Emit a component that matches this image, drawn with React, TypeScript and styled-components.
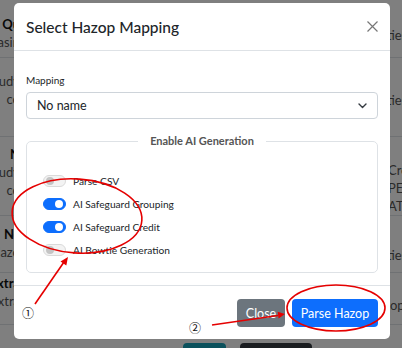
import React from "react";
import styled, { createGlobalStyle } from "styled-components";

const Global = createGlobalStyle`
  html, body { margin: 0; padding: 0; }
  body {
    width: 402px;
    height: 348px;
    overflow: hidden;
    background: #ffffff;
    font-family: Lato, "Noto Sans", Arial, sans-serif;
    color: #212529;
  }
  * { box-sizing: border-box; }
`;

const Screen = styled.div`
  position: relative;
  width: 402px;
  height: 348px;
  overflow: hidden;
`;

const PageList = styled.div`
  display: flex;
  flex-direction: column;
`;

const PageRow = styled.div<{ $h: number }>`
  height: ${(p) => p.$h}px;
  flex: none;
  border-bottom: 1px solid #dee2e6;
  display: grid;
  grid-template-columns: 20px 1fr 60px;
`;

const Edge = styled.div<{ $side: "left" | "right"; $shift: number }>`
  display: flex;
  flex-direction: column;
  justify-content: center;
  align-items: ${(p) => (p.$side === "left" ? "flex-end" : "flex-start")};
  padding-top: ${(p) => Math.max(p.$shift * 2, 0)}px;
  padding-bottom: ${(p) => Math.max(-p.$shift * 2, 0)}px;
  overflow: hidden;
  white-space: nowrap;
  font-size: 13px;
  line-height: 18px;
`;

const EdgeTitle = styled.span`
  font-weight: 700;
  color: #111;
`;

const EdgeSub = styled.span<{ $x?: number }>`
  color: #555;
  margin-left: ${(p) => p.$x ?? 0}px;
`;

const PageFooter = styled.div`
  display: flex;
  gap: 14px;
  padding: 18px 0 0 183px;
`;

const PageBtn = styled.div<{ $bg: string; $w: number }>`
  width: ${(p) => p.$w}px;
  height: 28px;
  border-radius: 4px;
  background: ${(p) => p.$bg};
`;

const Backdrop = styled.div`
  position: absolute;
  inset: 0;
  background: rgba(0, 0, 0, 0.5);
  display: flex;
  align-items: flex-start;
  padding: 3px 12px 0 14px;
`;

const Modal = styled.div`
  width: 376px;
  height: 336px;
  background: #fff;
  border-radius: 5px;
  display: flex;
  flex-direction: column;
`;

const Header = styled.div`
  height: 48px;
  flex: none;
  padding: 0 12px;
  border-bottom: 1px solid #dee2e6;
  display: flex;
  align-items: center;
  justify-content: space-between;
`;

const Title = styled.h5`
  margin: 0;
  font-size: 15.5px;
  font-weight: 500;
  line-height: 20px;
  color: #212529;
`;

const CloseX = styled.svg`
  display: block;
  width: 11px;
  height: 11px;
`;

const Body = styled.div`
  padding: 21px 12px 12px;
  flex: none;
`;

const Label = styled.div`
  font-size: 10px;
  line-height: 16px;
  margin-bottom: 4px;
  color: #212529;
`;

const Select = styled.div`
  height: 27px;
  border: 1px solid #ced4da;
  border-radius: 4px;
  padding: 0 10px;
  display: flex;
  align-items: center;
  justify-content: space-between;
  font-size: 12.5px;
  color: #212529;
`;

const Fieldset = styled.fieldset`
  margin: 14px 0 0;
  border: 1px solid #dee2e6;
  border-radius: 5px;
  padding: 22px 16px 12px;
  min-width: 0;
`;

const Legend = styled.legend`
  margin: 0 auto;
  padding: 0 12px;
  font-size: 11px;
  line-height: 16px;
  font-weight: 700;
  color: #555;
`;

const SwitchList = styled.div`
  display: flex;
  flex-direction: column;
  gap: 3px;
`;

const SwitchRow = styled.div`
  height: 20px;
  display: flex;
  align-items: center;
  gap: 7px;
  font-size: 10.2px;
  color: #212529;
`;

const Toggle = styled.span<{ $on: boolean }>`
  width: 23px;
  height: 12px;
  border-radius: 6px;
  flex: none;
  display: flex;
  align-items: center;
  justify-content: ${(p) => (p.$on ? "flex-end" : "flex-start")};
  padding: 0 2px;
  background: ${(p) => (p.$on ? "#0d6efd" : "#f3f3f3")};
  border: 1px solid ${(p) => (p.$on ? "#0d6efd" : "#dadada")};
  &::after {
    content: "";
    width: 8px;
    height: 8px;
    border-radius: 50%;
    background: ${(p) => (p.$on ? "#fff" : "#c4c4c4")};
  }
`;

const Footer = styled.div`
  flex: none;
  border-top: 1px solid #dee2e6;
  padding: 13px 12px 12px;
  display: flex;
  justify-content: flex-end;
  gap: 7px;
`;

const Button = styled.button<{ $variant: "secondary" | "primary"; $w: number }>`
  width: ${(p) => p.$w}px;
  height: 28px;
  border: none;
  border-radius: 4px;
  padding: 0;
  font-family: inherit;
  font-size: 12.5px;
  color: #fff;
  background: ${(p) => (p.$variant === "primary" ? "#0d6efd" : "#6c757d")};
`;

const Annotations = styled.svg`
  position: absolute;
  left: 0;
  top: 0;
  pointer-events: none;
`;

const switches = [
  { label: "Parse CSV", on: false },
  { label: "AI Safeguard Grouping", on: true },
  { label: "AI Safeguard Credit", on: true },
  { label: "AI Bowtie Generation", on: false },
];

type PageRowData = {
  h: number;
  left: [string, string][];
  right: [string, number][];
  ls: number;
  rs: number;
};

const rows: PageRowData[] = [
  { h: 58, left: [["t", "HAZOP Qu"], ["s", "Basin"]], right: [["Activities", 12]], ls: 4, rs: 6 },
  { h: 79, left: [["s", "Study"], ["s", "co"]], right: [["Activities", 12]], ls: -7, rs: 3 },
  { h: 79, left: [["t", "N"], ["s", "Study"], ["s", "co"]], right: [["Create", 46], ["PENDING", 46], ["UPDATE", 19]], ls: -4, rs: 12 },
  { h: 57, left: [["t", "Nc"], ["s", "Hazo"]], right: [["Activities", 12]], ls: -1, rs: 11 },
  { h: 52, left: [["t", "Extra"], ["s", "Extra"]], right: [["Hazop", 26]], ls: -7, rs: 6 },
];

export default function App() {
  return (
    <>
      <Global />
      <Screen>
        <PageList>
          {rows.map((r, i) => (
            <PageRow key={i} $h={r.h}>
              <Edge $side="left" $shift={r.ls}>
                {r.left.map(([k, t], j) =>
                  k === "t" ? <EdgeTitle key={j}>{t}</EdgeTitle> : <EdgeSub key={j}>{t}</EdgeSub>
                )}
              </Edge>
              <div />
              <Edge $side="right" $shift={r.rs}>
                {r.right.map(([t, x], j) => (
                  <EdgeSub key={j} $x={x}>{t}</EdgeSub>
                ))}
              </Edge>
            </PageRow>
          ))}
          <PageFooter>
            <PageBtn $bg="#17a2b8" $w={43} />
            <PageBtn $bg="#343a40" $w={72} />
          </PageFooter>
        </PageList>

        <Backdrop>
          <Modal>
            <Header>
              <Title>Select Hazop Mapping</Title>
              <CloseX viewBox="0 0 11 11">
                <path d="M0.5 0.5L10.5 10.5M10.5 0.5L0.5 10.5" stroke="#777" strokeWidth="1.2" fill="none" />
              </CloseX>
            </Header>
            <Body>
              <Label>Mapping</Label>
              <Select>
                <span>No name</span>
                <svg width="9" height="6" viewBox="0 0 9 6">
                  <path d="M1 1l3.5 3.5L8 1" stroke="#343a40" strokeWidth="1.4" fill="none" strokeLinecap="round" strokeLinejoin="round" />
                </svg>
              </Select>
              <Fieldset>
                <Legend>Enable AI Generation</Legend>
                <SwitchList>
                  {switches.map((s) => (
                    <SwitchRow key={s.label}>
                      <Toggle $on={s.on} />
                      <span>{s.label}</span>
                    </SwitchRow>
                  ))}
                </SwitchList>
              </Fieldset>
            </Body>
            <Footer>
              <Button $variant="secondary" $w={48}>Close</Button>
              <Button $variant="primary" $w={86}>Parse Hazop</Button>
            </Footer>
          </Modal>
        </Backdrop>

        <Annotations width="402" height="348" viewBox="0 0 402 348">
          <ellipse cx="77" cy="216" rx="65" ry="37" transform="rotate(4 77 216)" fill="none" stroke="#e50000" strokeWidth="1.6" />
          <line x1="35" y1="304" x2="64" y2="262" stroke="#e50000" strokeWidth="1.6" />
          <polygon points="68,257 66.3,265.5 60.5,261.5" fill="#e50000" />
          <text x="28" y="317.5" textAnchor="middle" fontSize="12" fontFamily="'Noto Sans CJK JP', sans-serif" fill="#111">①</text>
          <ellipse cx="336" cy="308" rx="49" ry="23" fill="none" stroke="#e50000" strokeWidth="1.6" />
          <line x1="212" y1="325" x2="278" y2="315.5" stroke="#e50000" strokeWidth="1.6" />
          <polygon points="285,314 278.6,318.6 277.6,311.7" fill="#e50000" />
          <text x="195" y="332.5" textAnchor="middle" fontSize="12" fontFamily="'Noto Sans CJK JP', sans-serif" fill="#111">②</text>
        </Annotations>
      </Screen>
    </>
  );
}
